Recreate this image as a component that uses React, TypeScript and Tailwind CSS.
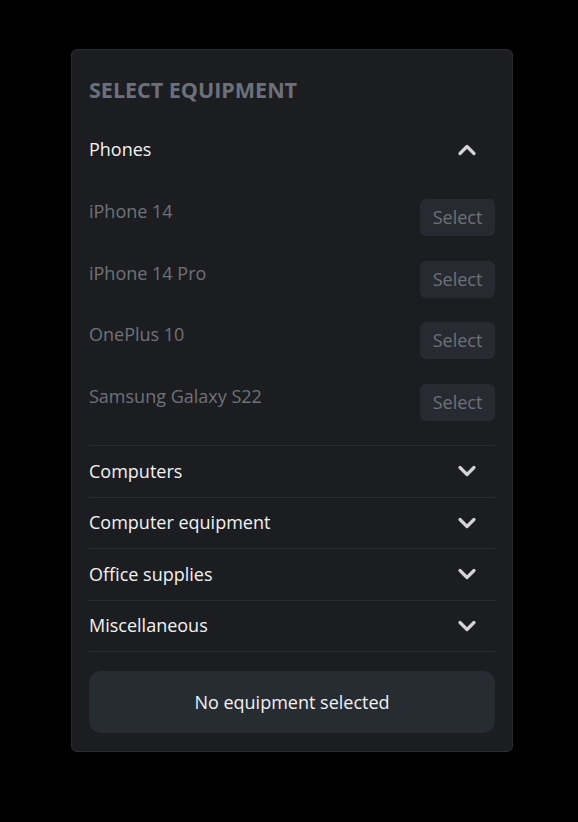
import React from "react";

const phones = ["iPhone 14", "iPhone 14 Pro", "OnePlus 10", "Samsung Galaxy S22"];
const categories = ["Computers", "Computer equipment", "Office supplies", "Miscellaneous"];

const Chevron = ({ up = false }: { up?: boolean }) => (
  <svg width="20" height="20" viewBox="0 0 20 20" fill="none" className="text-[#d4d4d6]">
    <path
      d={up ? "M3 13.5 L10 6.5 L17 13.5" : "M3 6.5 L10 13.5 L17 6.5"}
      stroke="currentColor"
      strokeWidth="3.2"
      strokeLinecap="round"
      strokeLinejoin="round"
    />
  </svg>
);

export default function App() {
  return (
    <div className="min-h-screen bg-black pt-[49px] pl-[71px] font-['Open_Sans',sans-serif]">
      <div className="w-[442px] rounded-md border border-[#2a2c31] bg-[#1c1d21] px-[17px] pt-[26px] pb-[18px]">
        <h2 className="text-[21.5px] leading-[28px] font-bold text-[#6c707a]">SELECT EQUIPMENT</h2>

        <div className="mt-[20px]">
          <button className="flex h-[51px] w-full items-center justify-between pr-[18px] text-left">
            <span className="text-[18px] text-[#f2f2f3]">Phones</span>
            <Chevron up />
          </button>
          <div className="flex flex-col gap-[24.5px] pt-[24px] pb-[24.5px]">
            {phones.map((p) => (
              <div key={p} className="flex items-start justify-between">
                <span className="text-[18px] leading-[24px] text-[#6f7278]">{p}</span>
                <button className="h-[37px] w-[75px] rounded-md bg-[#272a30] text-[18px] text-[#6d7177]">
                  Select
                </button>
              </div>
            ))}
          </div>
        </div>

        {categories.map((c) => (
          <button
            key={c}
            className="flex h-[51.5px] w-full items-center justify-between border-t border-[#2b2d32] pr-[18px] text-left"
          >
            <span className="text-[18px] text-[#f2f2f3]">{c}</span>
            <Chevron />
          </button>
        ))}

        <div className="border-t border-[#2b2d32] pt-[19px]">
          <div className="flex h-[62px] items-center justify-center rounded-xl bg-[#272b32] text-[18px] text-[#f2f2f3]">
            No equipment selected
          </div>
        </div>
      </div>
    </div>
  );
}
